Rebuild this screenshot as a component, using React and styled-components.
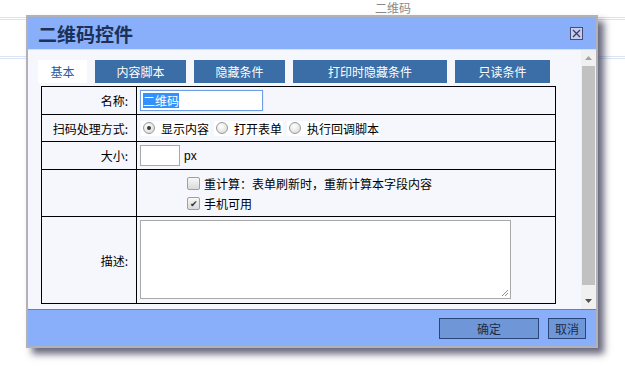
import styled, { createGlobalStyle } from "styled-components";

const GlobalStyle = createGlobalStyle`
  html, body {
    margin: 0;
    padding: 0;
    background: #fff;
  }
  body {
    font-family: "Noto Sans CJK SC", "Liberation Sans", sans-serif;
    font-size: 12px;
  }
`;

const Page = styled.div`
  position: relative;
  width: 625px;
  height: 366px;
  overflow: hidden;
  background: #fff;
`;

const TopBar = styled.div`
  height: 17px;
  padding-left: 375px;
  border-bottom: 3px double #d9e3f4;
  color: #8a8a8a;
  font-size: 12px;
  line-height: 15px;
`;

const SecondLine = styled.div`
  margin-top: 36px;
  border-bottom: 3px double #dbe4f4;
`;

const Dialog = styled.div`
  position: absolute;
  left: 26px;
  top: 15px;
  width: 568px;
  border: 2px solid #b2b2b6;
  box-shadow: 6px 6px 7px rgba(40, 40, 70, 0.7);
  display: flex;
  flex-direction: column;
`;

const Header = styled.div`
  height: 32px;
  border-bottom: 1px solid #d6e0ee;
  background: #89affa;
  display: flex;
  align-items: center;
  justify-content: space-between;
  padding: 0 13px 0 10px;
`;

const Title = styled.h1`
  margin: 0;
  font-size: 19px;
  font-weight: 700;
  color: #1b3157;
`;

const CloseBox = styled.div`
  width: 11px;
  height: 11px;
  border: 1px solid #4b4b72;
  background: #c4ccf2;
  display: flex;
  align-items: center;
  justify-content: center;
`;

const Body = styled.div`
  height: 259px;
  background: #f5f7fc;
  display: flex;
`;

const Content = styled.div`
  flex: 1;
  padding: 10px 0 0 10px;
`;

const Tabs = styled.div`
  display: flex;
  gap: 8px;
  height: 23px;
`;

const Tab = styled.div`
  width: ${(p) => p.$w}px;
  background: ${(p) => (p.$active ? "#fff" : "#3b6ea6")};
  color: ${(p) => (p.$active ? "#2c5c9c" : "#fff")};
  display: flex;
  align-items: center;
  justify-content: center;
  font-size: 12px;
`;

const Form = styled.div`
  margin: 3px 0 0 3px;
  width: 514px;
  border-top: 1px solid #000;
  border-left: 1px solid #000;
  display: grid;
  grid-template-columns: 95px 419px;
  grid-template-rows: 28px 27px 28px 47px 87px;
`;

const Cell = styled.div`
  border-right: 1px solid #000;
  border-bottom: 1px solid #000;
  display: flex;
  align-items: center;
  box-sizing: border-box;
  color: #000;
`;

const Label = styled(Cell)`
  justify-content: flex-end;
  padding-right: 8px;
`;

const Field = styled(Cell)`
  padding-left: ${(p) => p.$pl ?? 3}px;
  padding-top: ${(p) => (p.$top ? 3 : 0)}px;
  flex-direction: ${(p) => (p.$col ? "column" : "row")};
  align-items: ${(p) => (p.$top || p.$col ? "flex-start" : "center")};
  justify-content: ${(p) => (p.$col ? "center" : "flex-start")};
`;

const TextBox = styled.div`
  width: ${(p) => p.$w}px;
  height: 21px;
  box-sizing: border-box;
  border: 1px solid ${(p) => (p.$focus ? "#6e9fe6" : "#a9a9a9")};
  box-shadow: ${(p) => (p.$focus ? "0 0 1px #9cc0f2" : "none")};
  background: #fff;
  display: flex;
  align-items: center;
  padding-left: 2px;
`;

const Selected = styled.span`
  background: #3390ff;
  color: #fff;
  line-height: 15px;
`;

const Unit = styled.span`
  margin-left: 4px;
  font-family: "Liberation Sans", sans-serif;
`;

const Choices = styled.div`
  display: flex;
  gap: 4px;
  margin-left: 1px;
`;

const Choice = styled.div`
  display: flex;
  align-items: center;
  gap: 6px;
  background: #fff;
  height: 15px;
  padding: 0 1px;
`;

const Radio = styled.span`
  width: 12px;
  height: 12px;
  border-radius: 50%;
  border: 1px solid #9a9a9a;
  box-sizing: border-box;
  background: radial-gradient(circle at 40% 35%, #ffffff 0%, #e6e6e6 60%, #cfcfcf 100%);
  display: flex;
  align-items: center;
  justify-content: center;
  margin-left: 1px;
  &::after {
    content: "";
    width: 4px;
    height: 4px;
    border-radius: 50%;
    background: ${(p) => (p.$on ? "#3a3a3a" : "transparent")};
  }
`;

const CheckLine = styled.div`
  display: flex;
  align-items: center;
  gap: 4px;
  height: 20px;
`;

const Check = styled.span`
  width: 11px;
  height: 11px;
  border: 1px solid #a0a0a0;
  border-radius: 2px;
  background: linear-gradient(#f7f7f7, #dadada);
  display: flex;
  align-items: center;
  justify-content: center;
  font-size: 9px;
  line-height: 1;
  color: #333;
`;

const Memo = styled.div`
  position: relative;
  width: 371px;
  height: 79px;
  box-sizing: border-box;
  border: 1px solid #a9a9a9;
  background: #fff;
`;

const Grip = styled.svg`
  position: absolute;
  right: 1px;
  bottom: 1px;
`;

const Scrollbar = styled.div`
  width: 15px;
  background: #f0f0f0;
  display: flex;
  flex-direction: column;
`;

const Arrow = styled.div`
  height: 16px;
  display: flex;
  align-items: center;
  justify-content: center;
`;

const Thumb = styled.div`
  height: 219px;
  margin: 0 1px 8px 1px;
  background: #c1c1c1;
`;

const Footer = styled.div`
  height: 36px;
  border-top: 1px solid #5d80c4;
  background: #89affa;
  display: flex;
  align-items: center;
  justify-content: flex-end;
  gap: 9px;
  padding-right: 10px;
`;

const Button = styled.button`
  width: ${(p) => p.$w}px;
  height: 21px;
  padding: 0;
  border: 1px solid #2a4679;
  background: #6f97d8;
  color: #1c2b49;
  font-family: "Noto Sans CJK SC", sans-serif;
  font-size: 12px;
`;

const tabs = [
  { name: "基本", w: 49, active: true },
  { name: "内容脚本", w: 91 },
  { name: "隐藏条件", w: 91 },
  { name: "打印时隐藏条件", w: 154 },
  { name: "只读条件", w: 95 },
];

const modes = ["显示内容", "打开表单", "执行回调脚本"];

function App() {
  return (
    <Page>
      <GlobalStyle />
      <TopBar>二维码</TopBar>
      <SecondLine />
      <Dialog>
        <Header>
          <Title>二维码控件</Title>
          <CloseBox>
            <svg width="9" height="9" viewBox="0 0 9 9">
              <path d="M1 1L8 8M8 1L1 8" stroke="#3d3d60" strokeWidth="1.3" />
            </svg>
          </CloseBox>
        </Header>
        <Body>
          <Content>
            <Tabs>
              {tabs.map((t) => (
                <Tab key={t.name} $w={t.w} $active={t.active}>
                  {t.name}
                </Tab>
              ))}
            </Tabs>
            <Form>
              <Label>名称:</Label>
              <Field>
                <TextBox $w={123} $focus>
                  <Selected>二维码</Selected>
                </TextBox>
              </Field>

              <Label>扫码处理方式:</Label>
              <Field>
                <Choices>
                  {modes.map((m, i) => (
                    <Choice key={m}>
                      <Radio $on={i === 0} />
                      {m}
                    </Choice>
                  ))}
                </Choices>
              </Field>

              <Label>大小:</Label>
              <Field>
                <TextBox $w={40} />
                <Unit>px</Unit>
              </Field>

              <Label />
              <Field $pl={50} $col>
                <CheckLine>
                  <Check />
                  重计算：表单刷新时，重新计算本字段内容
                </CheckLine>
                <CheckLine>
                  <Check>✔</Check>
                  手机可用
                </CheckLine>
              </Field>

              <Label>描述:</Label>
              <Field $pl={3} $top>
                <Memo>
                  <Grip width="9" height="9" viewBox="0 0 9 9">
                    <path d="M8 2L2 8M8 5L5 8" stroke="#8a8a8a" strokeWidth="1" />
                  </Grip>
                </Memo>
              </Field>
            </Form>
          </Content>
          <Scrollbar>
            <Arrow>
              <svg width="7" height="4" viewBox="0 0 7 4">
                <path d="M0 4L3.5 0L7 4Z" fill="#a3a3a3" />
              </svg>
            </Arrow>
            <Thumb />
            <Arrow>
              <svg width="7" height="4" viewBox="0 0 7 4">
                <path d="M0 0L3.5 4L7 0Z" fill="#505050" />
              </svg>
            </Arrow>
          </Scrollbar>
        </Body>
        <Footer>
          <Button $w={100}>确定</Button>
          <Button $w={38}>取消</Button>
        </Footer>
      </Dialog>
    </Page>
  );
}

export default App;
